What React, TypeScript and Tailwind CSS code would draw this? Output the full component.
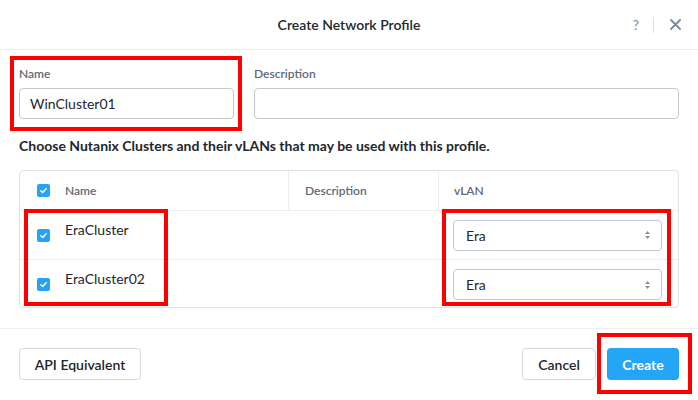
import React from "react";

const Check: React.FC = () => (
  <span className="flex h-[13px] w-[13px] items-center justify-center rounded-[2px] bg-[#26a3f4]">
    <svg width="9" height="9" viewBox="0 0 10 10" fill="none">
      <path d="M2 5.2 4.1 7.2 8 2.9" stroke="#fff" strokeWidth="1.6" strokeLinecap="round" strokeLinejoin="round" />
    </svg>
  </span>
);

const VlanSelect: React.FC<{ value: string }> = ({ value }) => (
  <div className="flex h-[31px] w-[209px] items-center justify-between rounded-[4px] border border-[#c3c8d2] bg-white pl-[12px] pr-[10px]">
    <span className="text-[14px] text-[#22272e]">{value}</span>
    <svg width="7" height="10" viewBox="0 0 7 10">
      <path d="M3.5 1 6 4H1z" fill="#8a93a3" />
      <path d="M3.5 9 6 6H1z" fill="#8a93a3" />
    </svg>
  </div>
);

const clusters = ["EraCluster", "EraCluster02"];

export default function App() {
  return (
    <div className="relative h-[400px] w-[698px] overflow-hidden bg-white font-['Lato','Liberation_Sans',sans-serif] text-[#22272e]">
      {/* header */}
      <div className="grid h-[50px] grid-cols-[1fr_auto_1fr] items-center border-b border-[#eceef2]">
        <div />
        <div className="text-[14px] font-semibold">Create Network Profile</div>
        <div className="flex items-center justify-end pr-[17px]">
          <span className="text-[14px] font-semibold text-[#8e97a7]">?</span>
          <span className="ml-[14px] h-[16px] w-px bg-[#dcdfe5]" />
          <svg className="ml-[16px]" width="11" height="11" viewBox="0 0 11 11">
            <path d="M1 1l9 9M10 1l-9 9" stroke="#7d8798" strokeWidth="1.8" strokeLinecap="round" />
          </svg>
        </div>
      </div>

      {/* body */}
      <div className="px-[19px]">
        <div className="mt-[17px] flex gap-[20px]">
          <div className="w-[215px]">
            <label className="block text-[12px] font-semibold leading-[14px] text-[#5f6878]">Name</label>
            <div className="mt-[7px] flex h-[31px] items-center rounded-[4px] border border-[#c3c8d2] px-[10px] text-[14px]">
              WinCluster01
            </div>
          </div>
          <div className="flex-1">
            <label className="block text-[12px] font-semibold leading-[14px] text-[#5f6878]">Description</label>
            <div className="mt-[7px] h-[31px] rounded-[4px] border border-[#c3c8d2]" />
          </div>
        </div>

        <p className="mt-[19px] text-[14px] font-bold leading-[16px]">
          Choose Nutanix Clusters and their vLANs that may be used with this profile.
        </p>

        <div className="mt-[16px] h-[138px] rounded-[4px] border border-[#dfe2e8]">
          <div className="grid h-[40px] grid-cols-[269px_150px_1fr] border-b border-[#eceef2] text-[12px] font-semibold text-[#5f6878]">
            <div className="flex items-center gap-[15px] border-r border-[#eceef2] pl-[17px]">
              <Check />
              <span>Name</span>
            </div>
            <div className="flex items-center border-r border-[#eceef2] pl-[16px]">Description</div>
            <div className="flex items-center pl-[15px]">vLAN</div>
          </div>
          {clusters.map((c, i) => (
            <div
              key={c}
              className={`grid h-[49px] grid-cols-[269px_150px_1fr] ${i === 0 ? "border-b border-[#eceef2]" : ""}`}
            >
              <div className="flex items-start gap-[15px] pl-[17px] pt-[8px]">
                <span className="mt-[10px]">
                  <Check />
                </span>
                <span className="text-[14px]">{c}</span>
              </div>
              <div />
              <div className="flex items-center pl-[14px]">
                <VlanSelect value="Era" />
              </div>
            </div>
          ))}
        </div>
      </div>

      {/* footer */}
      <div className="mt-[20px] flex items-center justify-between border-t border-[#eceef2] px-[19px] pt-[19px]">
        <button className="h-[32px] w-[122px] rounded-[4px] border border-[#d5d9e0] bg-white text-[14px] font-semibold">
          API Equivalent
        </button>
        <div className="flex gap-[11px]">
          <button className="h-[32px] w-[74px] rounded-[4px] border border-[#d5d9e0] bg-white text-[14px] font-semibold">
            Cancel
          </button>
          <button className="h-[32px] w-[72px] rounded-[4px] bg-[#25a5f6] text-[14px] font-bold text-white">
            Create
          </button>
        </div>
      </div>

      {/* annotation boxes */}
      <div className="pointer-events-none absolute left-[10px] top-[56px] h-[75px] w-[232px] border-[4px] border-[#ff0000]" />
      <div className="pointer-events-none absolute left-[24px] top-[209px] h-[97px] w-[144px] border-[4px] border-[#ff0000]" />
      <div className="pointer-events-none absolute left-[442px] top-[209px] h-[97px] w-[229px] border-[4px] border-[#ff0000]" />
      <div className="pointer-events-none absolute left-[597px] top-[333px] h-[61px] w-[95px] border-[4px] border-[#ff0000]" />
    </div>
  );
}
